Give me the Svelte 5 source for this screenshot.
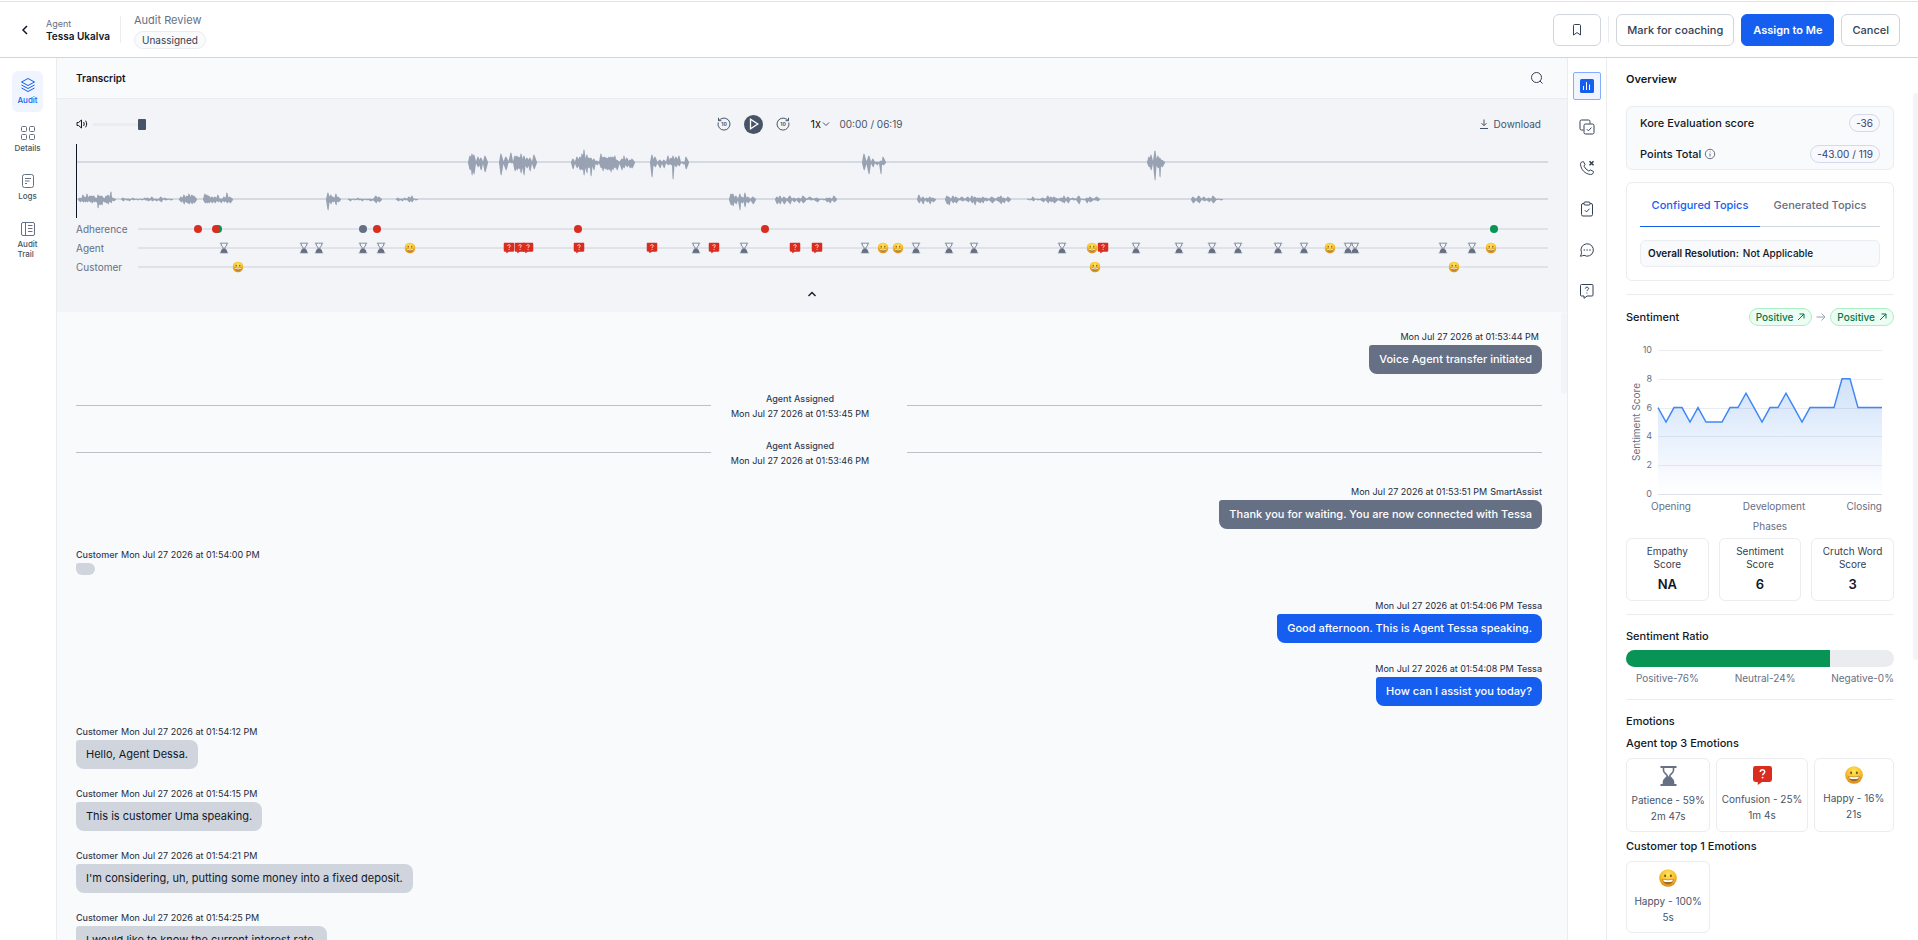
<script>
  const navItems = [
    { id: 'layers', label: 'Audit', active: true },
    { id: 'grid', label: 'Details' },
    { id: 'doc', label: 'Logs' },
    { id: 'trail', label: 'Audit Trail' },
  ];

  const railItems = [
    { id: 'chart', label: 'Overview', active: true },
    { id: 'copycheck', label: 'Evaluation' },
    { id: 'phone', label: 'Call events' },
    { id: 'clipboard', label: 'Checklist' },
    { id: 'chat', label: 'Comments' },
    { id: 'question', label: 'Questions' },
  ];

  // Each burst is a list of [x, up, down] peaks on a 1472 unit wide timeline.
  const agentWave = [
    [[394, 7, 8], [396, 9, 13], [398, 8, 12], [402, 6, 5], [405, 5, 8], [409, 7, 10]],
    [[425, 9, 13], [430, 6, 8], [435, 10, 1], [439, 7, 9], [441, 7, 8], [443, 6, 7], [445, 9, 11], [448, 7, 13], [451, 5, 6], [454, 5, 9], [458, 8, 7]],
    [[497, 4, 7], [501, 6, 6], [504, 6, 8], [506, 9, 8], [508, 13, 13], [511, 8, 11], [513, 5, 6], [515, 5, 14], [518, 4, 8], [521, 2, 3], [525, 9, 6], [527, 6, 9], [529, 6, 7], [531, 5, 8], [533, 6, 8], [535, 6, 10], [537, 6, 8], [539, 7, 6], [541, 3, 8], [546, 4, 8], [548, 7, 6], [551, 5, 5], [554, 3, 6], [556, 4, 6]],
    [[576, 8, 15], [579, 6, 5], [584, 3, 6], [588, 3, 6], [592, 7, 3], [595, 5, 3], [597, 7, 17], [600, 6, 5], [603, 7, 4], [607, 1, 2], [610, 6, 7]],
    [[788, 9, 8], [793, 7, 12], [797, 4, 5], [801, 1, 3], [805, 2, 12], [807, 6, 3]],
    [[1073, 6, 5], [1075, 8, 8], [1079, 12, 18], [1082, 7, 6], [1084, 5, 15], [1086, 3, 5]],
  ];
  const customerWave = [
    [[4, 2, 3], [7, 5, 3], [9, 3, 3], [11, 6, 3], [14, 4, 3], [16, 4, 4], [18, 4, 3], [20, 2, 3], [22, 5, 9], [24, 4, 6], [26, 4, 6], [28, 2, 3], [30, 4, 4], [32, 5, 5], [35, 8, 4], [37, 2, 2]],
    [[47, 2, 2], [50, 1, 1], [53, 1, 2], [57, 2, 1], [61, 1, 1], [65, 1, 1], [69, 2, 1], [72, 2, 2], [76, 3, 2], [80, 1, 2], [85, 3, 3], [89, 2, 1], [94, 1, 1]],
    [[105, 3, 3], [108, 5, 5], [111, 4, 4], [113, 6, 5], [116, 5, 5], [118, 4, 4]],
    [[129, 6, 4], [131, 5, 4], [133, 4, 4], [136, 3, 4], [139, 3, 4], [142, 5, 3], [145, 1, 4], [148, 3, 3], [151, 7, 4], [154, 3, 4]],
    [[252, 7, 11], [255, 5, 5], [257, 3, 3], [260, 6, 6], [262, 3, 3]],
    [[274, 1, 2], [278, 1, 1], [282, 2, 1], [286, 1, 2], [290, 1, 1], [294, 1, 2], [300, 4, 4], [303, 3, 3]],
    [[322, 2, 2], [326, 1, 2], [329, 2, 1], [333, 3, 3], [336, 4, 3], [339, 1, 1]],
    [[655, 6, 6], [657, 6, 7], [660, 4, 5], [664, 6, 11], [666, 3, 4], [669, 7, 8], [672, 3, 4], [677, 3, 5]],
    [[701, 3, 5], [704, 4, 5], [708, 3, 5], [714, 4, 5], [718, 2, 3], [723, 2, 4], [727, 4, 4], [734, 3, 1], [741, 2, 3], [747, 1, 1], [751, 2, 3], [754, 2, 4], [758, 4, 3]],
    [[843, 5, 4], [847, 3, 5], [851, 2, 3], [854, 3, 5], [857, 2, 3]],
    [[871, 4, 5], [873, 3, 6], [877, 4, 4], [880, 3, 4], [886, 3, 2], [892, 3, 3], [896, 4, 4], [899, 3, 6], [902, 2, 3], [904, 2, 4], [907, 3, 4], [910, 2, 2], [916, 3, 4], [923, 3, 3], [925, 4, 5], [928, 2, 4], [932, 3, 3]],
    [[953, 1, 1], [957, 3, 2], [961, 1, 1], [967, 2, 3], [972, 4, 4], [975, 3, 3], [978, 3, 4], [986, 2, 3], [988, 4, 4], [992, 3, 4], [997, 2, 1], [1003, 4, 5], [1007, 1, 1], [1011, 2, 4], [1014, 3, 3], [1021, 3, 2]],
    [[1117, 3, 4], [1123, 4, 4], [1128, 3, 2], [1133, 2, 3], [1137, 4, 4], [1144, 1, 1]],
  ];

  function burst(peaks, mid) {
    const outline = [];
    peaks.forEach(([x, up, down], i) => {
      const prev = peaks[i - 1];
      const gap = prev ? x - prev[0] : 9;
      const keep = gap <= 2 ? 0.75 : gap <= 3 ? 0.45 : 0.12;
      if (prev) {
        outline.push([x - gap / 2, Math.min(up, prev[1]) * keep + 0.5, Math.min(down, prev[2]) * keep + 0.5]);
      } else {
        outline.push([x - 2, 0.5, 0.5]);
      }
      outline.push([x - 0.5, up, down - 1], [x + 0.5, up - 0.5, down]);
    });
    outline.push([peaks[peaks.length - 1][0] + 3, 0.5, 0.5]);
    const top = outline.map(([x, u]) => `${x} ${mid - u}`);
    const bottom = outline.map(([x, , d]) => `${x} ${mid + d}`).reverse();
    return `M${top.join('L')}L${bottom.join('L')}Z`;
  }

  const tracks = [
    {
      label: 'Adherence',
      marks: [[60, 'red'], [80, 'green'], [78, 'red'], [225, 'gray'], [239, 'red'], [440, 'red'], [627, 'red'], [1356, 'green']],
    },
    {
      label: 'Agent',
      marks: [
        [86, 'hourglass'], [166, 'hourglass'], [181, 'hourglass'], [225, 'hourglass'], [243, 'hourglass'], [272, 'smile'],
        [371, 'confused'], [382, 'confused'], [390, 'confused'], [441, 'confused'], [514, 'confused'], [558, 'hourglass'],
        [576, 'confused'], [606, 'hourglass'], [657, 'confused'], [679, 'confused'], [727, 'hourglass'], [745, 'smile'],
        [760, 'smile'], [778, 'hourglass'], [811, 'hourglass'], [836, 'hourglass'], [924, 'hourglass'], [954, 'smile'],
        [965, 'confused'], [998, 'hourglass'], [1041, 'hourglass'], [1074, 'hourglass'], [1100, 'hourglass'],
        [1140, 'hourglass'], [1166, 'hourglass'], [1192, 'smile'], [1210, 'hourglass'], [1217, 'hourglass'],
        [1305, 'hourglass'], [1334, 'hourglass'], [1353, 'smile'],
      ],
    },
    { label: 'Customer', marks: [[100, 'smile'], [957, 'smile'], [1316, 'smile']] },
  ];

  const messages = [
    { kind: 'system', time: 'Mon Jul 27 2026 at 01:53:44 PM', who: '', text: 'Voice Agent transfer initiated' },
    { kind: 'event', time: 'Mon Jul 27 2026 at 01:53:45 PM', text: 'Agent Assigned' },
    { kind: 'event', time: 'Mon Jul 27 2026 at 01:53:46 PM', text: 'Agent Assigned' },
    { kind: 'system', time: 'Mon Jul 27 2026 at 01:53:51 PM', who: 'SmartAssist', text: 'Thank you for waiting. You are now connected with Tessa' },
    { kind: 'customer', time: 'Mon Jul 27 2026 at 01:54:00 PM', who: 'Customer', text: '' },
    { kind: 'agent', time: 'Mon Jul 27 2026 at 01:54:06 PM', who: 'Tessa', text: 'Good afternoon. This is Agent Tessa speaking.' },
    { kind: 'agent', time: 'Mon Jul 27 2026 at 01:54:08 PM', who: 'Tessa', text: 'How can I assist you today?' },
    { kind: 'customer', time: 'Mon Jul 27 2026 at 01:54:12 PM', who: 'Customer', text: 'Hello, Agent Dessa.' },
    { kind: 'customer', time: 'Mon Jul 27 2026 at 01:54:15 PM', who: 'Customer', text: 'This is customer Uma speaking.' },
    { kind: 'customer', time: 'Mon Jul 27 2026 at 01:54:21 PM', who: 'Customer', text: "I'm considering, uh, putting some money into a fixed deposit." },
    { kind: 'customer', time: 'Mon Jul 27 2026 at 01:54:25 PM', who: 'Customer', text: 'I would like to know the current interest rate.' },
  ];

  const sentiment = [6, 5, 6, 6, 5, 6, 5, 5, 5, 6, 6, 7, 6, 5, 6, 6, 7, 6, 5, 6, 6, 6, 6, 8, 8, 6, 6, 6, 6];
  const points = sentiment.map((v, i) => `${32 + i * 8} ${154 - v * 14.4}`).join('L');

  const scores = [
    { name: 'Empathy Score', value: 'NA' },
    { name: 'Sentiment Score', value: '6' },
    { name: 'Crutch Word Score', value: '3' },
  ];
  const agentEmotions = [
    { icon: 'hourglass', name: 'Patience - 59%', time: '2m 47s' },
    { icon: 'confused', name: 'Confusion - 25%', time: '1m 4s' },
    { icon: 'smile', name: 'Happy - 16%', time: '21s' },
  ];

  let volume = $state(100);
  let speed = $state('1x');
</script>

{#snippet emotion(name)}
  {#if name === 'hourglass'}
    <svg class="emo hourglass" viewBox="0 0 16 20" aria-hidden="true">
      <path d="M0 0h16v2H0zM0 18h16v2H0z" fill="#667085" />
      <path d="M3 2v2.500c0 2.500 3.800 3.800 3.800 5.500S3 13 3 16v2h10v-2c0-3-3.800-4.300-3.800-6S13 7 13 4.500V2" fill="none" stroke="#667085" stroke-width="1.600" />
      <path d="M2.500 18v-2c0-2.500 3.500-4 5.500-6 2 2 5.500 3.500 5.500 6v2z" fill="#667085" />
    </svg>
  {:else if name === 'confused'}
    <svg class="emo confused" viewBox="0 0 20 20" aria-hidden="true">
      <path d="M2.500 0h15A2.500 2.500 0 0 1 20 2.500v11.800a2.500 2.500 0 0 1-2.500 2.500H9.500L5 20v-3.200H2.500A2.500 2.500 0 0 1 0 14.300V2.500A2.500 2.500 0 0 1 2.500 0z" fill="#d92d20" />
      <path d="M7.600 6.400c0-3.200 4.800-3 4.800-.3 0 1.900-2.300 1.900-2.300 3.600" fill="none" stroke="#fff" stroke-width="1.500" />
      <circle cx="10.100" cy="12.200" r="1" fill="#fff" />
    </svg>
  {:else}
    <svg class="emo smile" viewBox="0 0 20 20" aria-hidden="true">
      <circle cx="10" cy="10" r="9.800" fill="url(#face)" />
      <ellipse cx="6.800" cy="7.600" rx="1.100" ry="1.600" fill="#7a5015" />
      <ellipse cx="13.200" cy="7.600" rx="1.100" ry="1.600" fill="#7a5015" />
      <path d="M3.800 11c3.500 1.200 8.900 1.200 12.400 0-.2 3.700-2.800 6-6.200 6s-6-2.300-6.200-6z" fill="#a06c20" />
      <path d="M4.600 11.800c3.300 1 7.500 1 10.800 0l-.5 2c-3 1-6.800 1-9.800 0z" fill="#fff" />
    </svg>
  {/if}
{/snippet}

<svg class="defs" width="0" height="0" aria-hidden="true">
  <defs>
    <radialGradient id="face" cx="0.5" cy="0.3" r="0.75">
      <stop offset="0" stop-color="#ffe75c" />
      <stop offset="0.55" stop-color="#f7bd2c" />
      <stop offset="1" stop-color="#d67c14" />
    </radialGradient>
    <linearGradient id="area" x1="0" y1="0" x2="0" y2="1">
      <stop offset="0" stop-color="#2e7be8" stop-opacity="0.22" />
      <stop offset="1" stop-color="#2e7be8" stop-opacity="0" />
    </linearGradient>
  </defs>
</svg>

<div class="page">
  <header class="topbar">
    <button class="back" aria-label="Back">
      <svg width="12" height="12" viewBox="0 0 12 12"><path d="M8 2 4 6l4 4" /></svg>
    </button>
    <div class="who">
      <span class="role">Agent</span>
      <strong>Tessa Ukalva</strong>
    </div>
    <div class="review">
      <h1>Audit Review</h1>
      <span class="status">Unassigned</span>
    </div>
    <div class="actions">
      <button class="btn mark" aria-label="Bookmark">
        <svg width="12" height="14" viewBox="0 0 12 14"><path d="M2.500 2.500c0-.6.400-1 1-1h5c.6 0 1 .4 1 1v9.500L6 9.600 2.500 12z" /></svg>
      </button>
      <span class="rule"></span>
      <button class="btn">Mark for coaching</button>
      <button class="btn primary">Assign to Me</button>
      <button class="btn">Cancel</button>
    </div>
  </header>

  <div class="body">
    <nav class="side">
      {#each navItems as item}
        <a href="#{item.id}" class:active={item.active}>
          <svg width="16" height="16" viewBox="0 0 16 16" aria-hidden="true">
            {#if item.id === 'layers'}
              <path d="M8 1.500 1.500 5 8 8.500 14.500 5zM1.500 8 8 11.500 14.500 8M1.500 11 8 14.500 14.500 11" />
            {:else if item.id === 'grid'}
              <rect x="1.500" y="1.500" width="5" height="5" rx="1" /><rect x="9.500" y="1.500" width="5" height="5" rx="1" />
              <rect x="1.500" y="9.500" width="5" height="5" rx="1" /><rect x="9.500" y="9.500" width="5" height="5" rx="1" />
            {:else if item.id === 'doc'}
              <rect x="2.500" y="1.500" width="11" height="13" rx="2" /><path d="M5 5.500h6M5 8h4.500M5 10.500h2" />
            {:else}
              <rect x="1.500" y="1.500" width="13" height="13" rx="1.500" /><path d="M5.500 1.500v13M8 4.500h4.500M8 7.500h4.500M8 10.500h4.500" />
            {/if}
          </svg>
          <span>{item.label}</span>
        </a>
      {/each}
    </nav>

    <main>
      <div class="title">
        <h2>Transcript</h2>
        <button class="icon" aria-label="Search">
          <svg width="14" height="14" viewBox="0 0 14 14"><circle cx="6.500" cy="6.500" r="5" /><path d="m10 10 2.500 2.500" /></svg>
        </button>
      </div>

      <section class="player">
        <div class="controls">
          <div class="volume">
            <svg width="12" height="12" viewBox="0 0 12 12" aria-hidden="true"><path d="M1 4.500h1.500L5.500 2v8L2.500 7.500H1zM7.500 4c.9 1.200.9 2.800 0 4M9.500 2.700c1.600 2 1.600 4.600 0 6.600" /></svg>
            <input type="range" min="0" max="100" bind:value={volume} aria-label="Volume" />
          </div>
          <div class="transport">
            <button class="icon" aria-label="Back 10 seconds">
              <svg width="14" height="14" viewBox="0 0 14 14"><path d="M1.200 5.500A6 6 0 1 0 3.500 2.200L1.700 3.500M1.500.8v2.900h2.900" /><text x="7" y="9">10</text></svg>
            </button>
            <button class="play" aria-label="Play">
              <svg width="10" height="12" viewBox="0 0 10 12"><path d="M1.500 1.300v9.400L8.800 6z" /></svg>
            </button>
            <button class="icon" aria-label="Forward 10 seconds">
              <svg width="14" height="14" viewBox="0 0 14 14"><path d="M12.800 5.500A6 6 0 1 1 10.500 2.200L12.300 3.500M12.500.8v2.900H9.600" /><text x="7" y="9">10</text></svg>
            </button>
            <label class="speed">
              <select bind:value={speed} aria-label="Playback speed"><option>1x</option><option>2x</option></select>
              <svg width="8" height="6" viewBox="0 0 8 6" aria-hidden="true"><path d="M1 1.500 4 4.500l3-3" /></svg>
            </label>
            <span class="time">00:00 / 06:19</span>
          </div>
          <button class="download">
            <svg width="10" height="10" viewBox="0 0 10 10" aria-hidden="true"><path d="M5 .5v6M2.500 4.200 5 6.700l2.500-2.500M1 9.500h8" /></svg>
            Download
          </button>
        </div>

        <svg class="wave" viewBox="0 0 1472 74" preserveAspectRatio="none" aria-hidden="true">
          <path d="M0 17h1472v2H0zM0 54h1472v2H0z" fill="#d5d9e2" />
          {#each agentWave as peaks}<path d={burst(peaks, 18.5)} fill="#98a2b3" />{/each}
          {#each customerWave as peaks}<path d={burst(peaks, 55.5)} fill="#98a2b3" />{/each}
          <path d="M0 0h1v74H0z" fill="#101828" />
        </svg>

        <div class="tracks">
          {#each tracks as track}
            <div class="track">
              <span>{track.label}</span>
              <div class="line">
                {#each track.marks as [at, type]}
                  <i class="mark-at" style="left: {(at / 1410) * 100}%">
                    {#if type === 'red' || type === 'green' || type === 'gray'}
                      <b class="dot {type}"></b>
                    {:else}
                      {@render emotion(type)}
                    {/if}
                  </i>
                {/each}
              </div>
            </div>
          {/each}
        </div>

        <button class="icon collapse" aria-label="Collapse player">
          <svg width="10" height="10" viewBox="0 0 10 10"><path d="M1.500 7 5 3.500 8.500 7" /></svg>
        </button>
      </section>

      <section class="chat">
        {#each messages as m}
          {#if m.kind === 'event'}
            <div class="event">
              <hr />
              <div><b>{m.text}</b><span>{m.time}</span></div>
              <hr />
            </div>
          {:else}
            <article class={m.kind}>
              <p class="meta">
                {#if m.kind === 'customer'}<span>{m.who}</span><time>{m.time}</time>{:else}<time>{m.time}</time><span>{m.who}</span>{/if}
              </p>
              <p class="bubble" class:empty={!m.text}>{m.text}</p>
            </article>
          {/if}
        {/each}
        <div class="thumb"></div>
      </section>
    </main>

    <div class="rail">
      {#each railItems as item}
        <button class:active={item.active} aria-label={item.label}>
          <svg width="16" height="16" viewBox="0 0 16 16" aria-hidden="true">
            {#if item.id === 'chart'}
              <rect x="1" y="1" width="14" height="14" rx="1.500" fill="#155eef" stroke="none" /><path d="M4.500 8v4M7.500 4v8M10.500 6.500V12" stroke="#fff" />
            {:else if item.id === 'copycheck'}
              <path d="M4.500 11H2.500A1.500 1.500 0 0 1 1 9.500v-7A1.500 1.500 0 0 1 2.500 1h7A1.500 1.500 0 0 1 11 2.500v2" /><rect x="5" y="5" width="10" height="10" rx="1.500" /><path d="m7.800 10.200 1.600 1.600 3-3.200" />
            {:else if item.id === 'phone'}
              <path d="M4.900 6.100a11 11 0 0 0 5 5l1.500-1.200 3 1.500c.3 2-1 3.200-2.700 3.100C6 14 2 9.800 1.500 4.300 1.400 2.600 2.700 1.500 4.500 1.700L6 4.600z" /><path d="m10.500 1.200 4 4m0-4-4 4" stroke-width="1.600" />
            {:else if item.id === 'clipboard'}
              <path d="M5 2.500H4A1.500 1.500 0 0 0 2.500 4v9.500A1.500 1.500 0 0 0 4 15h8a1.500 1.500 0 0 0 1.500-1.500V4A1.500 1.500 0 0 0 12 2.500h-1" /><rect x="5" y="1" width="6" height="3" rx="1" /><path d="m5.800 9.200 1.700 1.700 3-3.200" />
            {:else if item.id === 'chat'}
              <path d="M2.600 10.700A6.200 6.200 0 1 1 5 13.300c-1 .3-2.300.7-3.600.9.500-1.200 1-2.400 1.200-3.500z" /><path d="M4.700 8h1M7.600 8h1M10.500 8h1" stroke-width="1.500" />
            {:else}
              <path d="M2.500 1.500h10.500a1 1 0 0 1 1 1v9.500a1 1 0 0 1-1 1H8l-3 2.300V13H2.500a1 1 0 0 1-1-1V2.500a1 1 0 0 1 1-1z" /><path d="M6.300 5.700c0-2.200 3.300-2 3.300-.1 0 1.200-1.700 1.200-1.700 2.400M7.900 9.500v1" />
            {/if}
          </svg>
        </button>
      {/each}
    </div>

    <aside>
      <h2>Overview</h2>

      <div class="card totals">
        <div><span>Kore Evaluation score</span><b class="pill">-36</b></div>
        <div>
          <span>Points Total
            <svg width="12" height="12" viewBox="0 0 12 12" aria-hidden="true"><circle cx="6" cy="6" r="4.700" /><path d="M6 5.500v3M6 3.500v.8" /></svg>
          </span>
          <b class="pill">-43.00 / 119</b>
        </div>
      </div>

      <div class="card topics">
        <div class="tabs" role="tablist">
          <button role="tab" aria-selected="true" class="on">Configured Topics</button>
          <button role="tab" aria-selected="false">Generated Topics</button>
        </div>
        <div class="resolution"><b>Overall Resolution:</b><span>Not Applicable</span></div>
      </div>

      <section class="sentiment">
        <div class="head">
          <h3>Sentiment</h3>
          <div class="flow">
            {#each [0, 1] as n}
              <span class="pos">Positive
                <svg width="8" height="8" viewBox="0 0 8 8" aria-hidden="true"><path d="m1 7 6-6M2.500 1H7v4.500" /></svg>
              </span>
              {#if n === 0}
                <svg class="to" width="10" height="10" viewBox="0 0 10 10" aria-hidden="true"><path d="M.5 5h8.500M5.500 1.500 9 5 5.500 8.500" /></svg>
              {/if}
            {/each}
          </div>
        </div>

        <svg class="chart" viewBox="0 0 268 198" role="img" aria-label="Sentiment score by phase">
          {#each [0, 2, 4, 6, 8, 10] as v}
            <path d="M32 {Math.round(154 - v * 14.4) + 0.5}h224" stroke={v ? '#ebecef' : '#dfe2e8'} fill="none" />
            <text x="26" y={157 - v * 14.4} text-anchor="end">{v}</text>
          {/each}
          <path d="M32 154L{points}L256 154Z" fill="url(#area)" stroke="none" />
          <path d="M{points}" fill="none" stroke="#4088f4" stroke-width="1.500" />
          <g class="axis">
            <text x="45" y="170" text-anchor="middle">Opening</text>
            <text x="148" y="170" text-anchor="middle">Development</text>
            <text x="256" y="170" text-anchor="end">Closing</text>
            <text x="144" y="190" text-anchor="middle">Phases</text>
            <text transform="translate(14 82) rotate(-90)" text-anchor="middle">Sentiment Score</text>
          </g>
        </svg>

        <div class="scores">
          {#each scores as s}
            <div><span>{s.name}</span><b>{s.value}</b></div>
          {/each}
        </div>
      </section>

      <section class="ratio">
        <h3>Sentiment Ratio</h3>
        <div class="bar"><div style="width: 76%"></div></div>
        <div class="legend"><span>Positive-76%</span><span>Neutral-24%</span><span>Negative-0%</span></div>
      </section>

      <section class="emotions">
        <h3>Emotions</h3>
        <h4>Agent top 3 Emotions</h4>
        <div class="faces">
          {#each agentEmotions as e}
            <div>{@render emotion(e.icon)}<span>{e.name}</span><span>{e.time}</span></div>
          {/each}
        </div>
        <h4>Customer top 1 Emotions</h4>
        <div class="faces single">
          <div>{@render emotion('smile')}<span>Happy - 100%</span><span>5s</span></div>
        </div>
      </section>
      <div class="thumb"></div>
    </aside>
  </div>
</div>

<style>
  :global(body) {
    margin: 0;
    font-family: Inter, 'Liberation Sans', sans-serif;
    color: #101828;
    background: #fff;
  }
  .page {
    display: flex;
    flex-direction: column;
    height: 100vh;
    font-size: 11px;
    line-height: 16px;
    overflow: hidden;
  }
  .defs { position: absolute; }
  h1, h2, h3, h4, p { margin: 0; font-size: 11px; font-weight: 500; }
  button, select, input { font: inherit; color: inherit; margin: 0; }
  button { padding: 0; border: 0; background: none; cursor: pointer; }
  svg { display: block; flex: none; fill: none; stroke: currentColor; stroke-width: 1; }
  svg text { stroke: none; fill: currentColor; }

  .topbar {
    display: flex;
    align-items: center;
    height: 55px;
    flex: none;
    margin-top: 1px;
    border-top: 1px solid #e0e3e8;
    border-bottom: 1px solid #d0d5dd;
  }
  .back { width: 12px; height: 12px; margin-left: 19px; }
  .back svg { stroke-width: 1.5; }
  .who {
    display: flex;
    flex-direction: column;
    margin-left: 15px;
    padding-right: 10px;
    border-right: 1px solid #eaecf0;
    height: 27px;
    justify-content: center;
    font-size: 10px;
    line-height: 12px;
  }
  .role { color: #667085; font-size: 9px; }
  .who strong { font-weight: 600; }
  .review { display: flex; flex-direction: column; align-items: flex-start; margin-left: 13px; gap: 2px; }
  h1 { color: #667085; font-weight: 400; line-height: 18px; }
  .status {
    border: 1px solid #eaecf0;
    border-radius: 9px;
    background: #f9fafb;
    color: #344054;
    font-size: 10px;
    font-weight: 400;
    line-height: 16px;
    padding: 0 7px;
  }
  .actions { display: flex; align-items: center; gap: 7px; margin-left: auto; margin-right: 18px; }
  .btn {
    height: 32px;
    padding: 0 10px;
    border: 1px solid #d0d5dd;
    border-radius: 6px;
    background: #fff;
    color: #344054;
    font-weight: 500;
  }
  .btn.primary { background: #155eef; border-color: #155eef; color: #fff; font-weight: 600; padding: 0 11px; }
  .btn.mark { width: 48px; display: grid; place-items: center; }
  .rule { width: 1px; height: 27px; background: #eaecf0; }

  .body { display: flex; flex: 1; min-height: 0; }
  .side {
    width: 57px;
    flex: none;
    box-sizing: border-box;
    border-right: 1px solid #eaecf0;
    display: flex;
    flex-direction: column;
    align-items: center;
    gap: 7px;
    padding: 13px 1px 0 0;
  }
  .side a {
    width: 31px;
    height: 41px;
    border-radius: 6px;
    display: flex;
    flex-direction: column;
    align-items: center;
    color: #667085;
    text-decoration: none;
    font-size: 8px;
    line-height: 10px;
    font-weight: 500;
    gap: 2px;
    padding-top: 6px;
    box-sizing: border-box;
  }
  .side a span { color: #475467; width: min-content; }
  .side a.active { background: #eff4ff; color: #155eef; }
  .side a.active span { color: #155eef; }

  main { flex: 1; min-width: 0; display: flex; flex-direction: column; background: #f9fafc; }
  .title {
    display: flex;
    justify-content: space-between;
    align-items: center;
    height: 40px;
    flex: none;
    padding: 0 23px 0 19px;
    border-bottom: 1px solid #eaecf0;
  }
  .title h2 { font-size: 10px; font-weight: 600; }
  .icon { color: #344054; display: grid; place-items: center; }

  .player { background: #f2f4f7; padding: 14px 19px 0 19px; height: 199px; flex: none; }
  .controls { display: grid; grid-template-columns: 1fr auto 1fr; align-items: center; height: 22px; }
  .volume { display: flex; align-items: center; gap: 5px; color: #101828; }
  .volume input { appearance: none; width: 53px; height: 12px; background: none; }
  .volume input::-webkit-slider-runnable-track { height: 3px; background: #eaecf0; }
  .volume input::-webkit-slider-thumb { appearance: none; width: 8px; height: 11px; margin-top: -4px; border-radius: 1px; background: #475467; }
  .transport { display: flex; align-items: center; color: #475467; padding-right: 4px; }
  .transport .icon { color: #475467; }
  .transport text { font-size: 5px; font-weight: 700; text-anchor: middle; }
  .play {
    width: 19px;
    height: 19px;
    border-radius: 50%;
    background: #475467;
    color: #fff;
    display: grid;
    place-items: center;
    margin: 0 13px;
  }
  .play svg { stroke-width: 1.3; }
  .speed { display: flex; align-items: center; margin: 0 9px 0 20px; }
  .speed select { appearance: none; border: 0; background: none; padding: 0; width: 12px; color: #101828; }
  .time { font-size: 10px; }
  .download { display: flex; align-items: center; gap: 5px; justify-self: end; margin-right: 7px; color: #475467; font-size: 10px; }
  .wave { width: 100%; height: 74px; margin-top: 9px; stroke: none; }
  .tracks { padding-top: 1px; }
  .track { display: flex; align-items: center; height: 19px; color: #667085; font-size: 10px; line-height: 14px; }
  .track span { width: 62px; flex: none; }
  .line { position: relative; flex: 1; height: 2px; background: #dfe2e8; }
  .mark-at { position: absolute; top: 1px; transform: translate(-50%, -50%); }
  .dot { display: block; width: 8px; height: 8px; border-radius: 50%; }
  .red { background: #d92d20; }
  .green { background: #079455; }
  .gray { background: #667085; }
  .emo { stroke: none; }
  .track .hourglass { width: 9px; height: 11px; }
  .track .confused { width: 11px; height: 11px; }
  .track .smile { width: 11px; height: 11px; }
  .collapse { margin: 13px auto 0; }
  .collapse svg { stroke-width: 1.4; color: #101828; }

  .chat { position: relative; flex: 1; min-height: 0; overflow: hidden; padding: 18px 25px 0 19px; }
  .thumb { position: absolute; top: 0; right: 0; width: 6px; height: 82px; border-radius: 3px; background: #f2f4f7; }
  article { display: flex; flex-direction: column; align-items: flex-end; margin-bottom: 19px; }
  article.customer { align-items: flex-start; margin-bottom: 18px; }
  article:has(+ .event) { margin-bottom: 8px; }
  .event + article { margin-top: 9px; }
  .meta { display: flex; gap: 3px; font-size: 9px; line-height: 14px; font-weight: 400; color: #344054; }
  .meta span { font-weight: 500; }
  .meta time { color: #1d2939; }
  .bubble {
    padding: 6px 10px 7px;
    margin-top: 1px;
    border-radius: 3px 8px 8px 8px;
    line-height: 16px;
    background: #667085;
    color: #fff;
  }
  .agent .bubble { background: #155eef; }
  .customer .bubble { background: #d0d5dd; color: #101828; font-weight: 400; }
  .bubble.empty { height: 12px; width: 19px; padding: 0; box-sizing: border-box; margin-bottom: 6px; }
  .event { display: flex; align-items: center; height: 47px; font-size: 9px; line-height: 15px; color: #1d2939; }
  .event b { font-weight: 500; color: #344054; }
  .event hr { flex: 1; border: 0; height: 1px; background: #bcc0c7; margin: 0; }
  .event div { display: flex; flex-direction: column; align-items: center; padding: 0 38px 0 20px; }

  .rail {
    width: 40px;
    flex: none;
    box-sizing: border-box;
    border-left: 1px solid #eaecf0;
    border-right: 1px solid #eaecf0;
    display: flex;
    flex-direction: column;
    align-items: center;
    gap: 13px;
    padding-top: 14px;
  }
  .rail button {
    width: 28px;
    height: 28px;
    display: grid;
    place-items: center;
    color: #344054;
    box-sizing: border-box;
    border-radius: 2px;
  }
  .rail button.active { border: 1px solid #84adff; background: #eff4ff; }

  aside { position: relative; width: 311px; flex: none; box-sizing: border-box; padding: 13px 24px 0 19px; overflow: hidden; }
  aside > .thumb { top: 35px; width: 5px; height: 567px; }
  aside h2 { font-weight: 600; }
  .card { border: 1px solid #eaecf0; border-radius: 6px; box-sizing: border-box; padding: 0 13px; }
  .totals { margin-top: 19px; height: 64px; background: #f9fafc; }
  .totals > div { display: flex; justify-content: space-between; align-items: center; height: 31px; }
  .totals span { display: flex; align-items: center; gap: 3px; font-weight: 500; }
  .totals svg { color: #667085; }
  .pill {
    border: 1px solid #d5d9eb;
    border-radius: 9px;
    background: #f8f9fc;
    color: #363f72;
    font-size: 10px;
    font-weight: 400;
    line-height: 16px;
    padding: 0 6px;
  }
  .topics { margin-top: 12px; height: 99px; }
  .tabs { display: flex; border-bottom: 1px solid #d0d5dd; height: 43px; }
  .tabs button { flex: 1; color: #667085; font-weight: 500; margin-bottom: -1px; white-space: nowrap; }
  .tabs .on { color: #155eef; border-bottom: 1px solid #155eef; }
  .resolution {
    display: flex;
    gap: 4px;
    margin-top: 13px;
    padding: 0 7px;
    border: 1px solid #eaecf0;
    border-radius: 6px;
    background: #f9fafc;
    font-size: 10px;
    line-height: 25px;
    font-weight: 500;
  }
  .resolution b { font-weight: 600; }

  .sentiment { border-top: 1px solid #eaecf0; margin-top: 13px; padding-top: 13px; }
  .head { display: flex; justify-content: space-between; align-items: center; height: 18px; }
  .flow { display: flex; align-items: center; gap: 4px; }
  .pos {
    display: flex;
    align-items: center;
    gap: 4px;
    border: 1px solid #abefc6;
    border-radius: 9px;
    background: #ecfdf3;
    color: #067647;
    font-size: 10px;
    font-weight: 500;
    line-height: 16px;
    padding: 0 6px;
  }
  .to { color: #98a2b3; }
  .chart { width: 100%; margin-top: 14px; color: #667085; stroke-width: 1; }
  .chart text { font-size: 9px; }
  .chart .axis text { font-size: 10px; }
  .scores { display: grid; grid-template-columns: repeat(3, 1fr); gap: 10px; }
  .scores div {
    border: 1px solid #eaecf0;
    border-radius: 6px;
    display: flex;
    flex-direction: column;
    align-items: center;
    text-align: center;
    height: 63px;
    box-sizing: border-box;
    padding: 6px 8px 0;
    color: #344054;
    font-size: 10px;
    line-height: 13px;
  }
  .scores b { font-size: 13px; font-weight: 600; line-height: 16px; color: #101828; margin-top: 5px; }

  .ratio { border-top: 1px solid #eaecf0; margin-top: 13px; padding-top: 13px; }
  .bar { height: 17px; margin-top: 6px; border-radius: 9px; background: #eaecf0; overflow: hidden; }
  .bar div { height: 100%; background: #079455; }
  .legend { display: flex; justify-content: space-between; padding-left: 10px; margin-top: 3px; color: #667085; font-size: 10px; }
  .emotions { border-top: 1px solid #eaecf0; margin-top: 13px; padding-top: 13px; }
  h4 { margin-top: 6px; }
  .faces { display: grid; grid-template-columns: 84fr 91fr 80fr; gap: 6px; margin-top: 7px; }
  .faces > div {
    border: 1px solid #eaecf0;
    border-radius: 6px;
    box-sizing: border-box;
    height: 74px;
    display: flex;
    flex-direction: column;
    align-items: center;
    padding-top: 7px;
    color: #475467;
    font-size: 10px;
    white-space: nowrap;
  }
  .faces span { line-height: 16px; }
  .faces .emo { margin-bottom: 6px; }
  .faces .hourglass { width: 17px; height: 20px; }
  .faces .confused { width: 19px; height: 19px; }
  .faces .smile { width: 18px; height: 18px; }
  .faces.single > div { height: 72px; }
</style>
